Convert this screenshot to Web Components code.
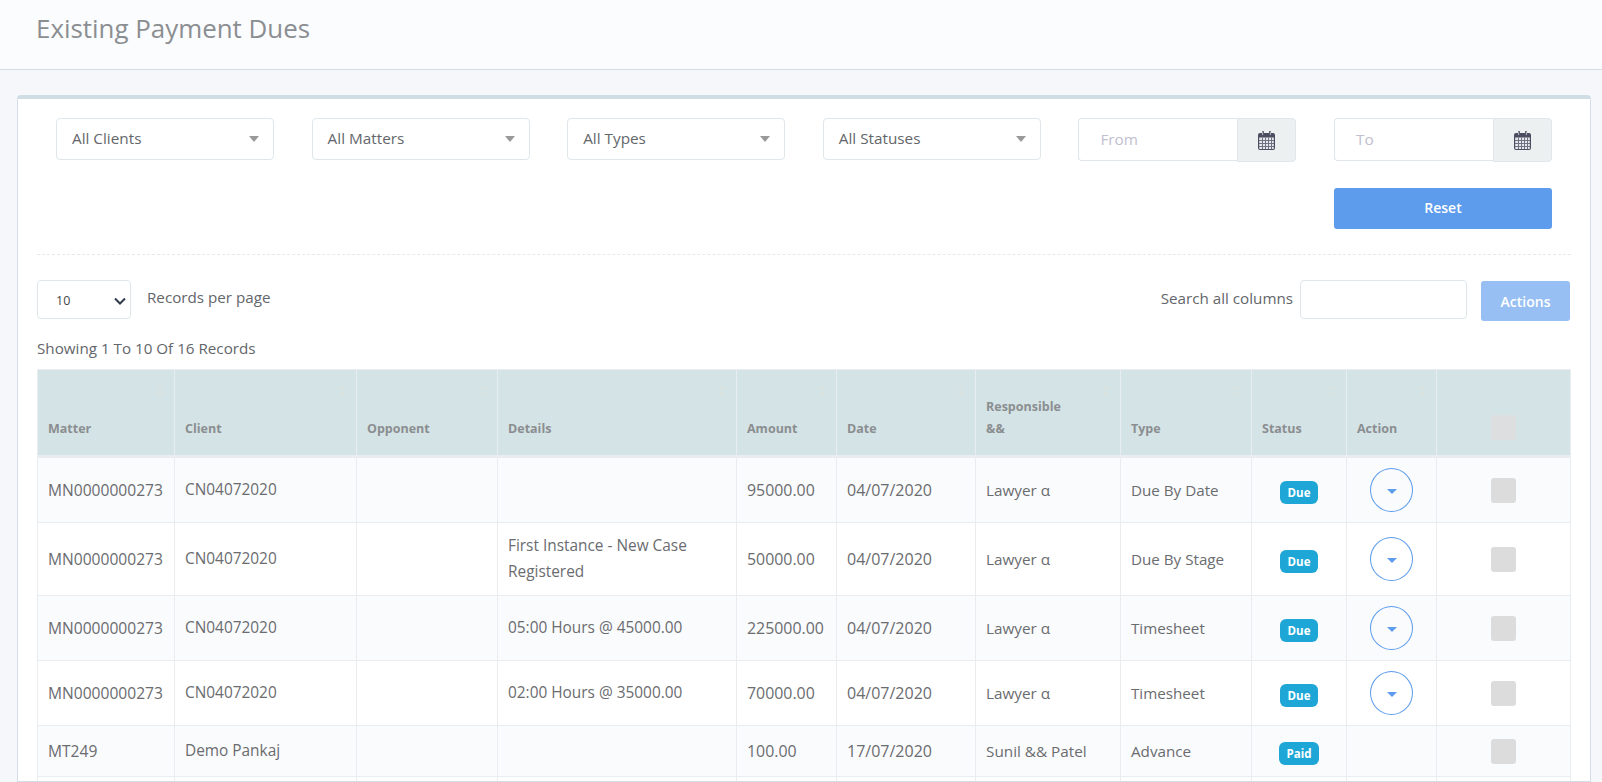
<!DOCTYPE html>
<html>
<head>
<meta charset="utf-8">
<title>Existing Payment Dues</title>
<style>
  html, body { margin: 0; height: 782px; overflow: hidden; background: #f5f7fa; }
  body { font-family: "Open Sans", "Noto Sans", sans-serif; color: #6a6c6f; }
</style>
</head>
<body>
<page-title>Existing Payment Dues</page-title>
<main-card>
  <div slot="filters">
    <filter-select label="All Clients"></filter-select>
    <filter-select label="All Matters"></filter-select>
    <filter-select label="All Types"></filter-select>
    <filter-select label="All Statuses"></filter-select>
    <date-field placeholder="From"></date-field>
    <date-field placeholder="To"></date-field>
    <reset-button style="grid-column:6">Reset</reset-button>
  </div>
  <table-tools slot="tools"></table-tools>
  <dues-table slot="table"></dues-table>
</main-card>

<script>
class PageTitle extends HTMLElement {
  connectedCallback () {
    this.attachShadow({ mode: 'open' })
    this.shadowRoot.innerHTML = `
    <style>
    :host { display: block; height: 69px; background: #fbfcfe; border-bottom: 1px solid #d5dee8; }
    h1 { margin: 0; padding: 11px 0 0 36px; font-size: 25.9px; line-height: 34px; font-weight: 400; color: #8b8e91; }
    </style>
    <h1><slot></slot></h1>`
  }
}

class MainCard extends HTMLElement {
  connectedCallback () {
    this.attachShadow({ mode: 'open' })
    this.shadowRoot.innerHTML = `
    <style>
    :host { display: block; margin: 25px 11px 0 17px; height: 687px; overflow: hidden; box-sizing: border-box; background: #fff; border: 1px solid #d5dee8; border-top: 4px solid #cfdde4; border-radius: 4px 4px 0 0; padding: 19px 19px 0 19px; }
    .rule { border-top: 1px dashed #e6e9ec; margin-top: 25px; }
    ::slotted([slot=filters]) { display: grid; grid-template-columns: repeat(6, 218px); column-gap: 37.6px; row-gap: 27px; padding: 0 0 0 19px; }
    </style>
    <slot name="filters"></slot>
    <div class="rule"></div>
    <slot name="tools"></slot>
    <slot name="table"></slot>`
  }
}

class FilterSelect extends HTMLElement {
  connectedCallback () {
    this.attachShadow({ mode: 'open' })
    this.shadowRoot.innerHTML = `
    <style>
    :host { display: flex; align-items: center; justify-content: space-between; height: 42px; box-sizing: border-box; background: #fff; border: 1px solid #e0e6ea; border-radius: 4px; padding: 0 14px 2px 15px; font-size: 15.3px; color: #63666a; }
    i { width: 0; height: 0; margin-top: 2px; border: 5px solid transparent; border-top: 6px solid #999; border-bottom: 0; }
    </style>
    <span>${this.getAttribute('label')}</span><i></i>`
  }
}

class DateField extends HTMLElement {
  connectedCallback () {
    this.attachShadow({ mode: 'open' })
    this.shadowRoot.innerHTML = `
    <style>
    :host { display: flex; height: 43px; font-size: 15.3px; }
    .in { flex: 1; height: 43px; box-sizing: border-box; background: #fff; border: 1px solid #e0e6ea; border-right: 0; border-radius: 4px 0 0 4px; padding: 0 0 0 21px; line-height: 41px; color: #bfc0d0; }
    .add { width: 59px; height: 44px; box-sizing: border-box; display: flex; align-items: center; justify-content: center; background: #ecf0f1; border: 1px solid #e0e6ea; border-radius: 0 4px 4px 0; }
    </style>
    <div class="in">${this.getAttribute('placeholder')}</div>
    <div class="add">
      <svg width="17" height="19" viewBox="0 0 17 19">
        <path fill="#4a4e60" d="M3 2h1v-1a1 1 0 0 1 2 0v1h5v-1a1 1 0 0 1 2 0v1h2a2 2 0 0 1 2 2v13a2 2 0 0 1-2 2h-13a2 2 0 0 1-2-2v-13a2 2 0 0 1 2-2z"/>
        <path fill="#e6e8ec" d="M1.200 6.500h14.600v10.800a.6.6 0 0 1-.6.6h-13.400a.6.6 0 0 1-.6-.6z"/>
        <path stroke="#6e7282" stroke-width="1" fill="none" d="M1 9.500h15M1 12.500h15M1 15.500h15M4.500 6.500v11.500M7.500 6.500v11.500M10.500 6.500v11.500M13.500 6.500v11.500"/>
        <path fill="#d9dbe0" d="M4.300 1h.8v3h-.8zM11.900 1h.8v3h-.8z"/>
      </svg>
    </div>`
  }
}

class ResetButton extends HTMLElement {
  connectedCallback () {
    this.attachShadow({ mode: 'open' })
    this.shadowRoot.innerHTML = `
    <style>
    :host { display: flex; align-items: center; justify-content: center; height: 41px; box-sizing: border-box; padding-bottom: 2px; background: #5d9cec; border-radius: 3px; color: #fff; font-size: 14px; font-weight: 600; }
    </style>
    <slot></slot>`
  }
}

class TableTools extends HTMLElement {
  connectedCallback () {
    this.attachShadow({ mode: 'open' })
    this.shadowRoot.innerHTML = `
    <style>
    :host { display: block; font-size: 15.2px; color: #63666a; }
    .row { display: flex; align-items: flex-start; padding-top: 25px; height: 41px; }
    .per { width: 94px; height: 39px; box-sizing: border-box; border: 1px solid #e0e6ea; border-radius: 4px; display: flex; align-items: center; justify-content: space-between; padding: 2px 4px 0 18px; font-size: 12.5px; color: #44474a; }
    .label { margin-left: 16px; line-height: 34px; }
    .search { margin-left: auto; line-height: 36px; }
    .box { width: 167px; height: 39px; box-sizing: border-box; margin-left: 7px; border: 1px solid #e0e6ea; border-radius: 4px; }
    .act { width: 89px; height: 40px; margin: 1px 1px 0 14px; display: flex; align-items: center; justify-content: center; background: #97bff3; border-radius: 3px; color: #fff; font-size: 14px; font-weight: 600; }
    .show { line-height: 20px; padding-top: 17px; }
    </style>
    <div class="row">
      <div class="per"><span>10</span>
        <svg width="12" height="8" viewBox="0 0 12 8"><path d="M1 1.500l5 5 5-5" fill="none" stroke="#2f3a4a" stroke-width="2"/></svg>
      </div>
      <span class="label">Records per page</span>
      <span class="search">Search all columns</span>
      <div class="box"></div>
      <div class="act">Actions</div>
    </div>
    <div class="show">Showing 1 To 10 Of 16 Records</div>`
  }
}

class StatusBadge extends HTMLElement {
  connectedCallback () {
    this.attachShadow({ mode: 'open' })
    this.shadowRoot.innerHTML = `
    <style>
    :host { display: inline-flex; align-items: center; height: 23px; padding: 0 7.5px; background: #1ea7d6; border-radius: 6px; color: #fff; font-size: 11.5px; font-weight: 700; }
    </style>
    <slot></slot>`
  }
}

class ActionButton extends HTMLElement {
  connectedCallback () {
    this.attachShadow({ mode: 'open' })
    this.shadowRoot.innerHTML = `
    <style>
    :host { display: inline-flex; align-items: center; justify-content: center; width: 43px; height: 44px; box-sizing: border-box; border: 1px solid #5d9cec; border-radius: 50%; }
    i { width: 0; height: 0; margin-top: 2px; border: 5px solid transparent; border-top: 5px solid #5d9cec; border-bottom: 0; }
    </style>
    <i></i>`
  }
}

class TickBox extends HTMLElement {
  connectedCallback () {
    this.attachShadow({ mode: 'open' })
    this.shadowRoot.innerHTML = `
    <style>
    :host { display: block; width: 25px; height: 25px; margin: auto; background: #dcdcdc; border-radius: 3px; }
    </style>`
  }
}

const dueRows = [
  ['MN0000000273', 'CN04072020', '', '', '95000.00', '04/07/2020', 'Lawyer α', 'Due By Date', 'Due', true, 66],
  ['MN0000000273', 'CN04072020', '', 'First Instance - New Case Registered', '50000.00', '04/07/2020', 'Lawyer α', 'Due By Stage', 'Due', true, 73],
  ['MN0000000273', 'CN04072020', '', '05:00 Hours @ 45000.00', '225000.00', '04/07/2020', 'Lawyer α', 'Timesheet', 'Due', true, 65],
  ['MN0000000273', 'CN04072020', '', '02:00 Hours @ 35000.00', '70000.00', '04/07/2020', 'Lawyer α', 'Timesheet', 'Due', true, 65],
  ['MT249', 'Demo Pankaj', '', '', '100.00', '17/07/2020', 'Sunil && Patel', 'Advance', 'Paid', false, 51],
  ['', '', '', '', '', '', '', '', '', false, 51]
]

class DuesTable extends HTMLElement {
  connectedCallback () {
    this.attachShadow({ mode: 'open' })
    const widths = [137, 182, 141, 239, 100, 139, 145, 131, 95, 90, 134]
    const sizes = [15.6, 15.4, 15.3, 15.4, 15.9, 16, 15.3, 15.2]
    const heads = ['Matter', 'Client', 'Opponent', 'Details', 'Amount', 'Date', 'Responsible<br>&amp;&amp;', 'Type', 'Status', 'Action']
    const sort = '<svg class="sort" width="8" height="10" viewBox="0 0 8 10"><path d="M4 0l4 4H0zM4 10l4-4H0z" fill="#d8e3e2"/></svg>'
    const rowHtml = r => `<tr style="height:${r[10]}px">
      ${r.slice(0, 8).map((c, i) => `<td style="font-size:${sizes[i]}px">${c.replace(/&/g, '&amp;')}</td>`).join('')}
      <td class="mid st">${r[8] ? `<status-badge>${r[8]}</status-badge>` : ''}</td>
      <td class="mid">${r[9] ? '<action-button></action-button>' : ''}</td>
      <td>${r[0] ? '<tick-box></tick-box>' : ''}</td>
    </tr>`
    this.shadowRoot.innerHTML = `
    <style>
    :host { display: block; margin: 11px 0 0 0; font-size: 15.2px; color: #6a6c6f; }
    table { border-collapse: collapse; table-layout: fixed; width: 1533px; }
    th { position: relative; height: 87px; box-sizing: border-box; padding: 0 10px 15px; background: #d4e3e5; border: 1px solid #eaedf0; border-bottom: 3px solid #eaedf0; text-align: left; vertical-align: bottom; font-size: 12.5px; line-height: 22px; font-weight: 700; color: #8b8e91; }
    td { padding: 0 10px; border: 1px solid #eaedf0; line-height: 26px; vertical-align: middle; }
    tbody tr:nth-child(odd) { background: #fafbfd; }
    .mid { text-align: center; padding: 0; }
    .st { padding-top: 2px; }
    .sort { position: absolute; top: 16px; right: 10px; }
    action-button { vertical-align: middle; }
    </style>
    <table>
      <colgroup>${widths.map(w => `<col style="width:${w}px">`).join('')}</colgroup>
      <thead><tr>${heads.map(h => `<th>${h}${sort}</th>`).join('')}<th><tick-box style="background:#dcdedf"></tick-box></th></tr></thead>
      <tbody>${dueRows.map(rowHtml).join('')}</tbody>
    </table>`
  }
}

customElements.define('page-title', PageTitle)
customElements.define('filter-select', FilterSelect)
customElements.define('date-field', DateField)
customElements.define('reset-button', ResetButton)
customElements.define('main-card', MainCard)
customElements.define('table-tools', TableTools)
customElements.define('status-badge', StatusBadge)
customElements.define('action-button', ActionButton)
customElements.define('tick-box', TickBox)
customElements.define('dues-table', DuesTable)
</script>
</body>
</html>
